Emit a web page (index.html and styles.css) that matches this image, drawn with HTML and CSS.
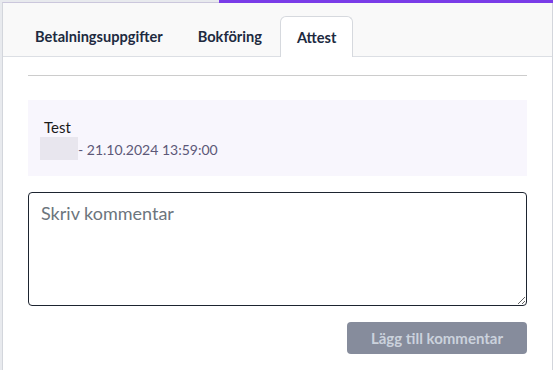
FILE: index.html
```html
<!DOCTYPE html>
<html lang="sv">
<head>
<meta charset="utf-8">
<link rel="stylesheet" href="styles.css">
</head>
<body>
<div class="card">
  <div class="progress"></div>
  <nav class="tabs">
    <div class="tab">Betalningsuppgifter</div>
    <div class="tab">Bokföring</div>
    <div class="tab active">Attest</div>
  </nav>
  <div class="content">
    <hr class="rule">
    <div class="comment">
      <div class="comment-text">Test</div>
      <div class="comment-meta"><span class="redacted"></span><span class="date">- 21.10.2024 13:59:00</span></div>
    </div>
    <textarea class="input" placeholder="Skriv kommentar"></textarea>
    <div class="actions">
      <button class="btn" disabled>Lägg till kommentar</button>
    </div>
  </div>
</div>
</body>
</html>
```

FILE: styles.css
```css
* { box-sizing: border-box; }
html, body { margin: 0; padding: 0; }
body {
  background: #e8eaee;
  font-family: Lato, "Open Sans", sans-serif;
  width: 553px;
  height: 370px;
  overflow: hidden;
  padding: 2px 0 0 2px;
}
.card {
  position: relative;
  background: #fff;
  border-top: 1px solid #cbc7dc;
  border-left: 1px solid #d3d6dc;
  border-right: 1px solid #d3d6dc;
  height: 368px;
}
.progress {
  position: absolute;
  top: -3px;
  left: 216px;
  right: -1px;
  height: 3px;
  background: #7a3ce8;
}
.tabs {
  display: flex;
  gap: 1px;
  background: #f9f9f9;
  border-bottom: 1px solid #dcdfe4;
  padding: 13px 0 0 15px;
  height: 54px;
}
.tab {
  height: 40px;
  padding: 0 16px;
  display: flex;
  align-items: center;
  font-size: 14.6px;
  font-weight: 700;
  color: #202a3f;
  border: 1px solid transparent;
  border-bottom: none;
  border-radius: 6px 6px 0 0;
}
.tab.active {
  background: #fff;
  border-color: #d6d9de;
  margin-bottom: -1px;
  height: 41px;
}
.content {
  padding: 18px 25px 0 25px;
  display: flex;
  flex-direction: column;
}
.rule {
  margin: 0;
  border: none;
  border-top: 1px solid #cccccc;
  height: 0;
}
.comment {
  margin-top: 24px;
  background: #f8f6fd;
  height: 76px;
  padding: 17px 12px 0 12px;
}
.comment-text {
  font-size: 15px;
  line-height: 20px;
  color: #1a1a1a;
  padding-left: 4px;
}
.comment-meta {
  display: flex;
  align-items: center;
  height: 23px;
}
.redacted {
  display: inline-block;
  width: 38px;
  height: 23px;
  background: #e8e6ee;
}
.date {
  font-size: 14px;
  color: #5c5878;
  padding-top: 2px;
}
.input {
  margin-top: 16px;
  height: 114px;
  width: 100%;
  border: 1px solid #1d2430;
  border-radius: 4px;
  padding: 9px 12px;
  font-family: inherit;
  font-size: 18px;
  color: #333;
  resize: vertical;
  outline: none;
}
.input::placeholder { color: #6c757d; }
.actions {
  display: flex;
  justify-content: flex-end;
  margin-top: 16px;
}
.btn {
  width: 180px;
  height: 32px;
  border: none;
  border-radius: 4px;
  background: #868c9c;
  color: #cbd2dc;
  font-family: inherit;
  font-size: 15px;
  font-weight: 700;
}
```
